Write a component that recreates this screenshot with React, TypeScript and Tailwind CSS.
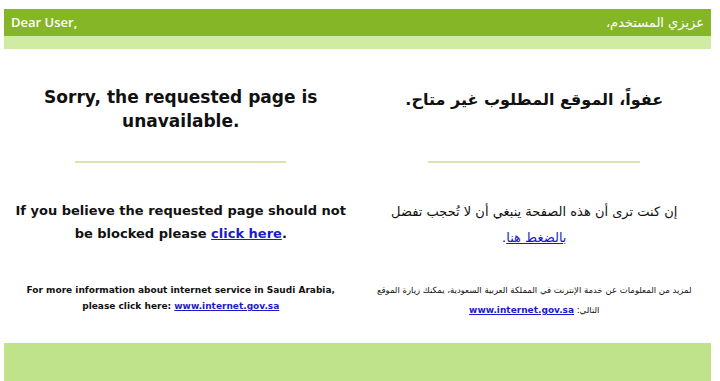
import React from 'react';

export default function App() {
  return (
    <div className="w-[720px] h-[381px] bg-white overflow-hidden pl-[4px] pr-[9px] pt-[9px] flex flex-col font-['DejaVu_Sans',sans-serif] text-[#111]">
      {/* greeting bar */}
      <div className="h-[27px] bg-[#85b628] flex items-center justify-between px-[7px] text-white font-['Open_Sans','DejaVu_Sans',sans-serif] font-semibold text-[13px]">
        <span>Dear User,</span>
        <span dir="rtl" className="font-['DejaVu_Sans',sans-serif] font-normal text-[13px]">عزيزي المستخدم،</span>
      </div>
      <div className="h-[13px] bg-[#d0eba2]" />

      {/* two languages side by side */}
      <div className="grid grid-cols-2 flex-1">
        {/* english */}
        <div className="flex flex-col items-center text-center">
          <h1 className="mt-[36px] h-[48px] text-[17px] leading-[24px] font-bold px-[30px]">
            Sorry, the requested page is unavailable.
          </h1>
          <div className="mt-[28px] h-[2px] w-[211px] bg-[#d5e8a9]" />
          <p className="mt-[36px] text-[13px] leading-[23px] font-bold px-[8px]">
            If you believe the requested page should not be blocked please{' '}
            <a href="#" className="text-[#1a1acc] underline">click here</a>.
          </p>
          <p className="mt-[37px] text-[9px] leading-[16px] font-bold">
            For more information about internet service in Saudi Arabia,
            <br />
            please click here:{' '}
            <a href="#" className="text-[#1a1acc] underline">www.internet.gov.sa</a>
          </p>
        </div>

        {/* arabic */}
        <div dir="rtl" className="flex flex-col items-center text-center font-['DejaVu_Sans',sans-serif]">
          <h1 className="mt-[36px] h-[48px] text-[16px] leading-[30px] font-bold">
            عفواً، الموقع المطلوب غير متاح.
          </h1>
          <div className="mt-[28px] h-[2px] w-[212px] bg-[#d5e8a9]" />
          <p className="mt-[36px] text-[13px] leading-[26px]">
            إن كنت ترى أن هذه الصفحة ينبغي أن لا تُحجب تفضل
            <br />
            <a href="#" className="text-[#1a1acc] underline">بالضغط هنا</a>.
          </p>
          <p className="mt-[29px] text-[8.5px] leading-[20px]">
            لمزيد من المعلومات عن خدمة الإنترنت في المملكة العربية السعودية، يمكنك زيارة الموقع
            <br />
            التالي:{' '}
            <a href="#" dir="ltr" className="text-[#1a1acc] underline font-bold text-[9px]">www.internet.gov.sa</a>
          </p>
        </div>
      </div>

      <div className="h-[38px] bg-[#bfe38b]" />
    </div>
  );
}
